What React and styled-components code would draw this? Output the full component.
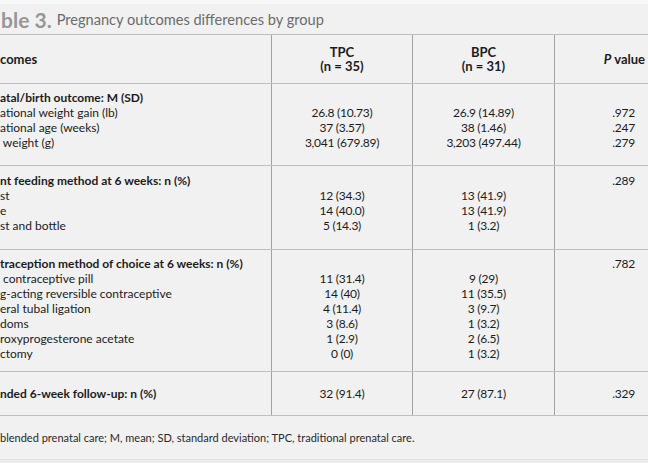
import React from "react";
import styled, { createGlobalStyle } from "styled-components";

const GlobalStyle = createGlobalStyle`
  html, body { margin: 0; padding: 0; background: #f1f1f1; overflow: hidden; }
  body { font-family: Lato, "Open Sans", sans-serif; color: #1c1c1c; }
`;

const Page = styled.div`
  width: 648px;
  height: 463px;
  background: #f1f1f1;
  display: flex;
  flex-direction: column;
  border-top: 4px solid #f7f7f7;
  box-sizing: border-box;
  overflow: hidden;
`;

const Title = styled.div`
  height: 30px;
  display: flex;
  align-items: center;
  gap: 5px;
  padding-left: 1px;
  white-space: nowrap;
`;

const TitleNum = styled.span`
  font-size: 21px;
  font-weight: 700;
  color: #979797;
`;

const TitleText = styled.span`
  font-size: 14.6px;
  color: #6c6c6c;
`;

const Table = styled.div`
  border-top: 1px solid #bfbfbf;
  display: flex;
  flex-direction: column;
`;

const Row = styled.div`
  display: grid;
  grid-template-columns: 272px 141px 142px 1fr;
  border-bottom: 1px solid #bfbfbf;
  min-height: ${(p) => p.$h || 0}px;
  box-sizing: border-box;
`;

const Cell = styled.div`
  display: flex;
  flex-direction: column;
  justify-content: ${(p) => (p.$center ? "center" : "flex-start")};
  align-items: ${(p) =>
    p.$align === "left" ? "flex-start" : p.$align === "right" ? "flex-end" : "center"};
  padding: ${(p) => p.$pt || 0}px ${(p) => p.$pr || 0}px ${(p) => p.$pb || 0}px 0;
  border-right: ${(p) => (p.$last ? "none" : "1px solid #a2a2a2")};
  box-sizing: border-box;
`;

const Line = styled.div`
  height: 15px;
  line-height: 15px;
  font-size: 12px;
  white-space: pre;
  font-weight: ${(p) => (p.$bold ? 700 : 400)};
  letter-spacing: ${(p) => (p.$num ? "-0.25px" : "0")};
`;

const HeadLine = styled.div`
  font-size: 13px;
  line-height: 14px;
  font-weight: 700;
  white-space: pre;
  text-align: center;
`;

const Footnote = styled.div`
  height: 43px;
  display: flex;
  align-items: center;
  font-size: 11px;
  color: #2a2a2a;
  white-space: pre;
  border-bottom: 1px solid #e2e2e2;
`;

const Band = styled.div`
  flex: 1;
  background: #ececec;
`;

const sections = [
  {
    head: "atal/birth outcome: M (SD)",
    items: ["ational weight gain (lb)", "ational age (weeks)", " weight (g)"],
    tpc: ["26.8 (10.73)", "37 (3.57)", "3,041 (679.89)"],
    bpc: ["26.9 (14.89)", "38 (1.46)", "3,203 (497.44)"],
    p: ["", ".972", ".247", ".279"],
    pt: 6,
    pb: 15,
  },
  {
    head: "nt feeding method at 6 weeks: n (%)",
    items: ["st", "e", "st and bottle"],
    tpc: ["12 (34.3)", "14 (40.0)", "5 (14.3)"],
    bpc: ["13 (41.9)", "13 (41.9)", "1 (3.2)"],
    p: [".289"],
    pt: 7,
    pb: 16,
  },
  {
    head: "traception method of choice at 6 weeks: n (%)",
    items: [
      " contraceptive pill",
      "g-acting reversible contraceptive",
      "eral tubal ligation",
      "doms",
      "roxyprogesterone acetate",
      "ctomy",
    ],
    tpc: ["11 (31.4)", "14 (40)", "4 (11.4)", "3 (8.6)", "1 (2.9)", "0 (0)"],
    bpc: ["9 (29)", "11 (35.5)", "3 (9.7)", "1 (3.2)", "2 (6.5)", "1 (3.2)"],
    p: [".782"],
    pt: 6,
    pb: 10,
  },
];

function Section({ s }) {
  return (
    <Row>
      <Cell $align="left" $pt={s.pt} $pb={s.pb}>
        <Line $bold>{s.head}</Line>
        {s.items.map((t, i) => (
          <Line key={i}>{t}</Line>
        ))}
      </Cell>
      <Cell $pt={s.pt} $pb={s.pb}>
        <Line> </Line>
        {s.tpc.map((t, i) => (
          <Line key={i} $num>{t}</Line>
        ))}
      </Cell>
      <Cell $pt={s.pt} $pb={s.pb}>
        <Line> </Line>
        {s.bpc.map((t, i) => (
          <Line key={i} $num>{t}</Line>
        ))}
      </Cell>
      <Cell $last $align="right" $pr={13} $pt={s.pt} $pb={s.pb}>
        {s.p.map((t, i) => (
          <Line key={i} $num>{t || " "}</Line>
        ))}
      </Cell>
    </Row>
  );
}

export default function App() {
  return (
    <>
      <GlobalStyle />
      <Page>
        <Title>
          <TitleNum>ble 3.</TitleNum>
          <TitleText>Pregnancy outcomes differences by group</TitleText>
        </Title>
        <Table>
          <Row $h={49}>
            <Cell $align="left" $center>
              <HeadLine>comes</HeadLine>
            </Cell>
            <Cell $center>
              <HeadLine>{"TPC\n(n = 35)"}</HeadLine>
            </Cell>
            <Cell $center>
              <HeadLine>{"BPC\n(n = 31)"}</HeadLine>
            </Cell>
            <Cell $last $center $align="right" $pr={3}>
              <HeadLine>
                <i>P</i> value
              </HeadLine>
            </Cell>
          </Row>
          {sections.map((s, i) => (
            <Section key={i} s={s} />
          ))}
          <Row $h={44}>
            <Cell $align="left" $center>
              <Line $bold>nded 6-week follow-up: n (%)</Line>
            </Cell>
            <Cell $center>
              <Line $num>32 (91.4)</Line>
            </Cell>
            <Cell $center>
              <Line $num>27 (87.1)</Line>
            </Cell>
            <Cell $last $center $align="right" $pr={13}>
              <Line $num>.329</Line>
            </Cell>
          </Row>
        </Table>
        <Footnote>blended prenatal care; M, mean; SD, standard deviation; TPC, traditional prenatal care.</Footnote>
        <Band />
      </Page>
    </>
  );
}
